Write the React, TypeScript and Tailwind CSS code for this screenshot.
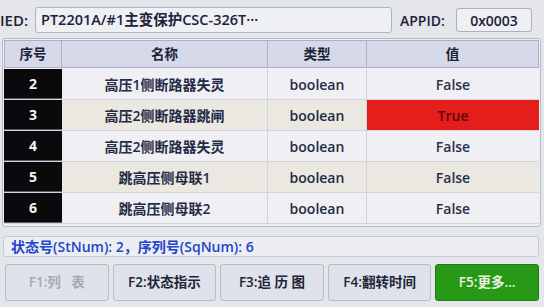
import React from "react";

const font = { fontFamily: '"Open Sans", "Noto Sans CJK SC", sans-serif' };

const rows = [
  { n: "2", name: "高压1侧断路器失灵", v: "False", alt: false },
  { n: "3", name: "高压2侧断路器跳闸", v: "True", alt: true },
  { n: "4", name: "高压2侧断路器失灵", v: "False", alt: false },
  { n: "5", name: "跳高压侧母联1", v: "False", alt: true },
  { n: "6", name: "跳高压侧母联2", v: "False", alt: false },
];

export default function App() {
  return (
    <div
      className="w-[544px] h-[307px] overflow-hidden bg-[#e4e6ea] text-[#232a44] font-semibold"
      style={font}
    >
      {/* top bar */}
      <div className="flex items-center h-[38px] pt-[2px]">
        <div className="ml-[0px] w-[33px] text-[15px] text-[#1c2238] whitespace-nowrap">IED:</div>
        <div className="h-[26px] w-[357px] ml-[2px] rounded-[3px] border border-[#aab4cc] bg-[#eef0f4] flex items-center pl-[5px] text-[14.5px] text-[#1c2238] overflow-hidden whitespace-nowrap">
          PT2201A/#1主变保护CSC-326T···
        </div>
        <div className="ml-[8px] w-[56px] text-[14px] text-[#1c2238]">APPID:</div>
        <div className="h-[24px] w-[76px] rounded-[3px] border border-[#aab0c0] bg-[#eef0f4] flex items-center justify-center text-[14px] text-[#1c2238]">
          0x0003
        </div>
      </div>

      {/* table */}
      <div className="mx-[2px] mt-[0px] w-[539px] h-[189px] border border-[#b4bace] rounded-[3px] bg-[#eef0f4] p-[1px]">
        <div className="grid grid-cols-[58px_206px_99px_1fr] h-[28px] text-[13.5px] text-[#1c2238]">
          <div className="flex items-center justify-center bg-[#d6d9e8] border border-[#a9b0c8]">序号</div>
          <div className="flex items-center justify-center bg-[#d6d9e8] border border-[#a9b0c8] border-l-0">名称</div>
          <div className="flex items-center justify-center bg-[#d6d9e8] border border-[#a9b0c8] border-l-0">类型</div>
          <div className="flex items-center justify-center bg-[#d6d9e8] border border-[#a9b0c8] border-l-0">值</div>
        </div>
        <div className="mt-[1px]">
          {rows.map((r) => (
            <div
              key={r.n}
              className={`grid grid-cols-[58px_206px_99px_1fr] h-[31px] border-b border-[#d2d5de] ${
                r.alt ? "bg-[#ebe8e2]" : "bg-[#f0f0f4]"
              }`}
            >
              <div className="flex items-center justify-center bg-[#0a0a0c] text-[#f4f4f4] text-[14px] font-bold border-b border-[#5a5e6a]">
                {r.n}
              </div>
              <div className="flex items-center justify-center border-r border-[#d0d3dc] text-[14px]">{r.name}</div>
              <div className="flex items-center justify-center border-r border-[#d0d3dc] text-[14px]">boolean</div>
              {r.v === "True" ? (
                <div className="flex items-center justify-center bg-[#e51d1b] text-[#5a0808] text-[14px]">True</div>
              ) : (
                <div className="flex items-center justify-center text-[14px] text-[#2a3048]">False</div>
              )}
            </div>
          ))}
        </div>
      </div>

      {/* status */}
      <div className="mx-[3px] mt-[9px] h-[21px] w-[536px] rounded-[3px] border border-[#c6cad6] bg-[#eceef2] flex items-center pl-[7px] text-[14px] text-[#2244cc] whitespace-nowrap">
        状态号(StNum): 2，序列号(SqNum): 6
      </div>

      {/* buttons */}
      <div className="grid grid-cols-5 gap-[4px] px-[5px] mt-[7px] h-[37px] text-[13.5px]">
        <div className="flex items-center justify-center rounded-[3px] border border-[#b8bccb] bg-[#dfe2ea] text-[#a6aab8]">
          F1:列&nbsp;&nbsp;&nbsp;表
        </div>
        <div className="flex items-center justify-center rounded-[3px] border border-[#b8bccb] bg-[#dfe2ea] text-[#1e2436]">
          F2:状态指示
        </div>
        <div className="flex items-center justify-center rounded-[3px] border border-[#b8bccb] bg-[#dfe2ea] text-[#1e2436]">
          F3:追&nbsp;历&nbsp;图
        </div>
        <div className="flex items-center justify-center rounded-[3px] border border-[#b8bccb] bg-[#dfe2ea] text-[#1e2436]">
          F4:翻转时间
        </div>
        <div className="flex items-center justify-center rounded-[3px] border border-[#1f7a12] bg-[#279916] text-[#e8f4e4]">
          F5:更多...
        </div>
      </div>
    </div>
  );
}
